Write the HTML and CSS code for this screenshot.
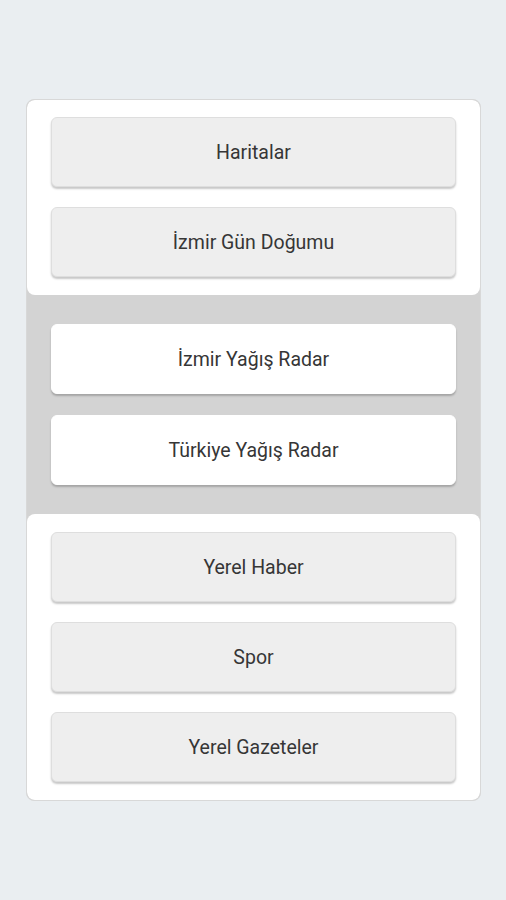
FILE: index.html
```html
<!DOCTYPE html>
<html lang="tr">
<head>
    <meta charset="UTF-8">
    <meta name="viewport" content="width=device-width, initial-scale=1.0">
    <title>İzmir</title>
    <link rel="stylesheet" href="styles.css">
</head>
<body>
    <div class="panel">
        <div class="section">
            <button class="menu-btn">Haritalar</button>
            <button class="menu-btn">İzmir Gün Doğumu</button>
        </div>
        <div class="section section-gray">
            <button class="menu-btn">İzmir Yağış Radar</button>
            <button class="menu-btn">Türkiye Yağış Radar</button>
        </div>
        <div class="section section-last">
            <button class="menu-btn">Yerel Haber</button>
            <button class="menu-btn">Spor</button>
            <button class="menu-btn">Yerel Gazeteler</button>
        </div>
    </div>
</body>
</html>
```

FILE: styles.css
```css
body { margin: 0; padding: 99px 25px 0 26px; background-color: #eaeef1; font-family: Roboto, "Liberation Sans", sans-serif; }
.panel { background: #d3d3d3; border: 1px solid #d8d8d8; border-radius: 8px; overflow: hidden; }
.section { display: flex; flex-direction: column; gap: 20px; padding: 17px 24px 18px; background: #fff; border-radius: 8px; }
.section-gray { background: #d3d3d3; border-radius: 0; padding: 29px 24px 29px; gap: 21px; }
.section-last { padding: 18px 24px 18px; }
.menu-btn { height: 70px; background-color: #eeeeee; border: 1px solid #dedede; border-radius: 6px; box-shadow: 0 2px 2px rgba(0,0,0,0.22); font-family: inherit; font-size: 19.5px; color: #363636; cursor: pointer; padding: 0; }
.section-gray .menu-btn { background-color: #fff; border-color: #fff; }
```
